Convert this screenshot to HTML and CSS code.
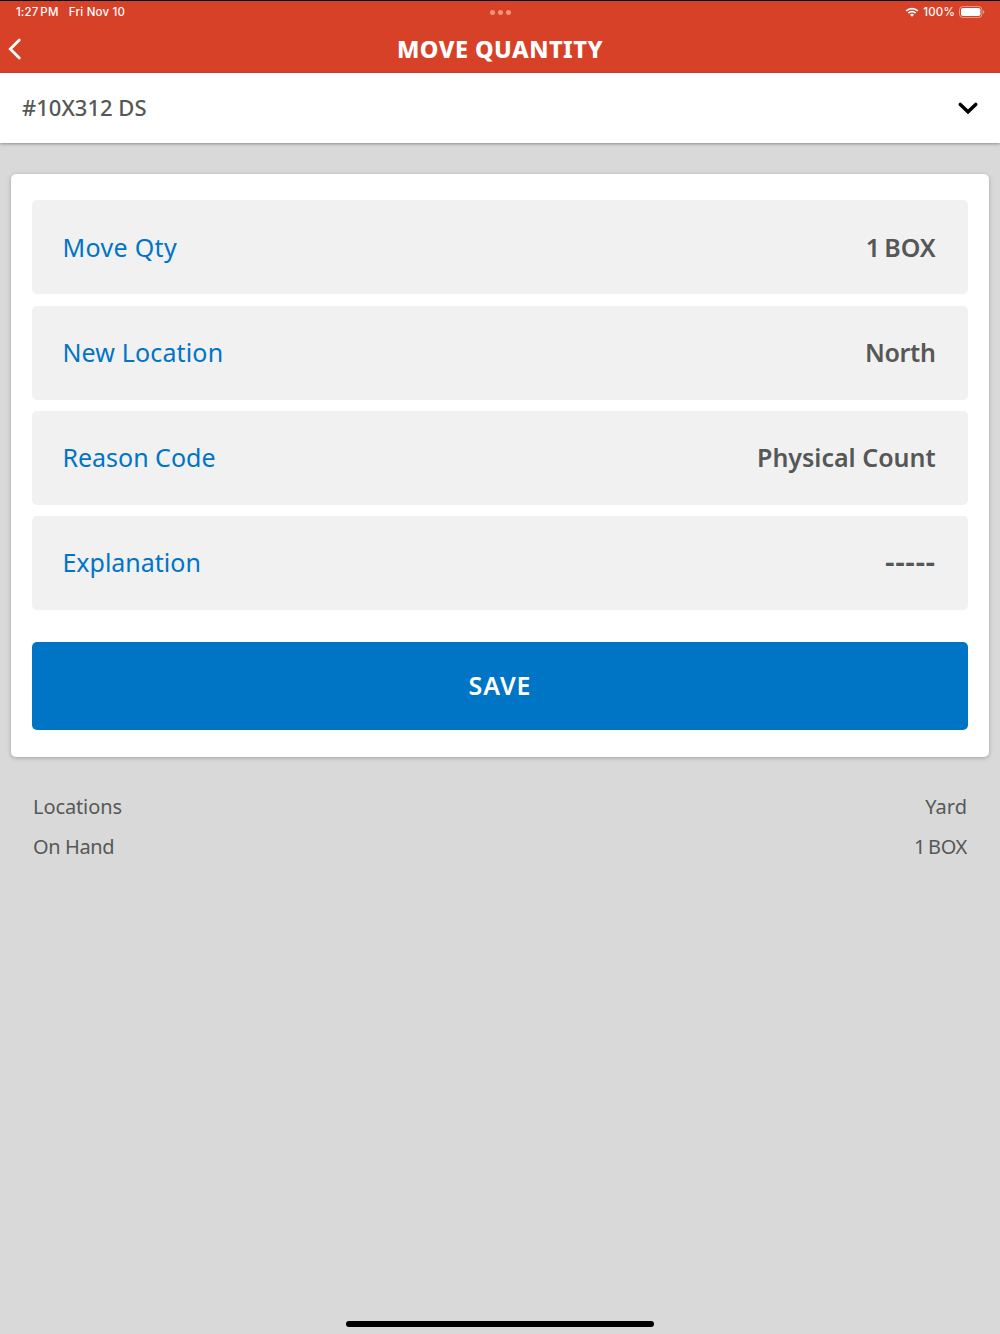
FILE: index.html
```html
<!DOCTYPE html>
<html lang="en">
<head>
  <meta charset="UTF-8">
  <title>Move Quantity</title>
  <link rel="stylesheet" href="styles.css">
</head>
<body>

  <header class="header">
    <div class="status-bar">
      <div class="status-left">
        <span class="time">1:27<span class="meridiem">PM</span></span>
        <span class="date">Fri Nov 10</span>
      </div>
      <div class="dots"><i></i><i></i><i></i></div>
      <div class="status-right">
        <svg class="wifi" viewBox="0 0 14 10" width="14" height="10">
          <path d="M1.2 3.9a8.3 8.3 0 0 1 11.6 0M3.3 6.1a5.3 5.3 0 0 1 7.4 0" fill="none" stroke="#fff" stroke-width="1.7"/>
          <path d="M7 9.8L5 7.8a2.9 2.9 0 0 1 4 0z" fill="#fff"/>
        </svg>
        <span class="percent">100%</span>
        <svg class="battery" viewBox="0 0 26 12" width="26" height="12">
          <rect x=".5" y=".5" width="22.4" height="11" rx="3.2" fill="none" stroke="#fff" stroke-opacity=".45"/>
          <rect x="2" y="2" width="19.4" height="8" rx="1.8" fill="#fff"/>
          <path d="M24 4.2q1.4.4 1.4 1.8T24 7.8z" fill="#fff" fill-opacity=".5"/>
        </svg>
      </div>
    </div>
    <div class="title-bar">
      <svg class="back" viewBox="0 0 14 22" width="14" height="22">
        <path d="M11.3 2L2.3 11l9 9" fill="none" stroke="#fff" stroke-width="2.8" stroke-linecap="round" stroke-linejoin="miter"/>
      </svg>
      <h1>MOVE QUANTITY</h1>
    </div>
  </header>

  <section class="item-bar">
    <span class="item-name">#10X312 DS</span>
    <svg class="chevron" viewBox="0 0 20 13" width="20" height="13">
      <path d="M2.3 2.4L10 9.8l7.7-7.4" fill="none" stroke="#000" stroke-width="3.4" stroke-linecap="round"/>
    </svg>
  </section>

  <main class="card">
    <div class="field">
      <span class="label qty">Move Qty</span>
      <span class="value box">1 BOX</span>
    </div>
    <div class="field">
      <span class="label location">New Location</span>
      <span class="value north">North</span>
    </div>
    <div class="field">
      <span class="label">Reason Code</span>
      <span class="value">Physical Count</span>
    </div>
    <div class="field">
      <span class="label">Explanation</span>
      <span class="value empty">-----</span>
    </div>
    <button class="save">SAVE</button>
  </main>

  <section class="summary">
    <div class="summary-row"><span class="locations">Locations</span><span>Yard</span></div>
    <div class="summary-row"><span class="on-hand">On Hand</span><span class="on-hand-qty">1 BOX</span></div>
  </section>

  <div class="home-indicator"></div>

</body>
</html>
```
FILE: styles.css
```css
* {
  box-sizing: border-box;
}
body {
  margin: 0;
  height: 1334px;
  display: flex;
  flex-direction: column;
  overflow: hidden;
  font-family: 'Noto Sans', 'Open Sans', sans-serif;
  background-color: #d9d9d9;
  color: #565857;
}

.header {
  height: 73px;
  background-color: #d74128;
  border-top: 1px solid #000;
  color: #fff;
}

.status-bar {
  height: 22px;
  padding: 0 15px 0 16px;
  display: grid;
  grid-template-columns: 1fr auto 1fr;
  align-items: center;
  font-family: Inter, sans-serif;
  font-size: 11.5px;
  font-weight: 500;
}
.status-left {
  display: flex;
  gap: 10px;
}
.time {
  letter-spacing: 0.1px;
}
.meridiem {
  margin-left: 2px;
  letter-spacing: 0.3px;
}
.date {
  letter-spacing: 0.2px;
}
.dots {
  display: flex;
  gap: 3px;
}
.dots i {
  width: 5px;
  height: 5px;
  border-radius: 50%;
  background-color: #ff907a;
}
.status-right {
  display: flex;
  justify-content: flex-end;
  align-items: center;
}
.percent {
  margin: 0 4px;
  letter-spacing: 0.2px;
}

.title-bar {
  height: 51px;
  padding: 1px 8px 0;
  display: grid;
  grid-template-columns: 14px 1fr 14px;
  align-items: center;
}
.title-bar h1 {
  margin: 0;
  font-size: 23.5px;
  line-height: 50px;
  font-weight: 800;
  letter-spacing: 0.45px;
  text-align: center;
}

.item-bar {
  height: 70px;
  padding: 0 22px;
  display: flex;
  justify-content: space-between;
  align-items: center;
  background-color: #fff;
  box-shadow: 0 1px 3px rgba(0,0,0,0.35);
}
.item-name {
  padding-bottom: 2px;
  font-size: 22px;
  font-weight: 500;
}

.card {
  margin: 31px 11px 0;
  height: 583px;
  padding: 26.4px 21.4px;
  background-color: #fff;
  border-radius: 5px;
  box-shadow: 0 1px 4px rgba(0,0,0,0.25);
}

.field {
  height: 94px;
  margin-bottom: 11.2px;
  padding: 0 32px 1px 30px;
  display: flex;
  justify-content: space-between;
  align-items: center;
  background-color: #f1f1f1;
  border-radius: 5px;
  font-size: 25px;
}
.label {
  color: #0074c5;
}
.qty {
  letter-spacing: 0.35px;
}
.location {
  letter-spacing: 0.15px;
}
.value {
  font-weight: 600;
}
.box {
  letter-spacing: -0.1px;
  word-spacing: -2px;
}
.north {
  letter-spacing: -0.3px;
}
.empty {
  font-size: 30px;
  line-height: 34px;
  letter-spacing: 0.5px;
  padding-bottom: 1px;
}

.save {
  display: block;
  width: 100%;
  height: 88px;
  margin-top: 32px;
  padding: 0 0 1px;
  border: none;
  border-radius: 5px;
  background-color: #0074c5;
  color: #fff;
  font-family: inherit;
  font-size: 25px;
  font-weight: 600;
  letter-spacing: 0.9px;
}

.summary {
  padding: 30px 33px 0;
}
.summary-row {
  height: 39.5px;
  display: flex;
  justify-content: space-between;
  align-items: center;
  font-size: 20px;
}
.locations {
  letter-spacing: -0.1px;
}
.on-hand {
  letter-spacing: -0.4px;
}
.on-hand-qty {
  letter-spacing: -0.3px;
  word-spacing: -2px;
}

.home-indicator {
  width: 308px;
  height: 6px;
  margin: auto auto 7px;
  border-radius: 3px;
  background-color: #000;
}
```
